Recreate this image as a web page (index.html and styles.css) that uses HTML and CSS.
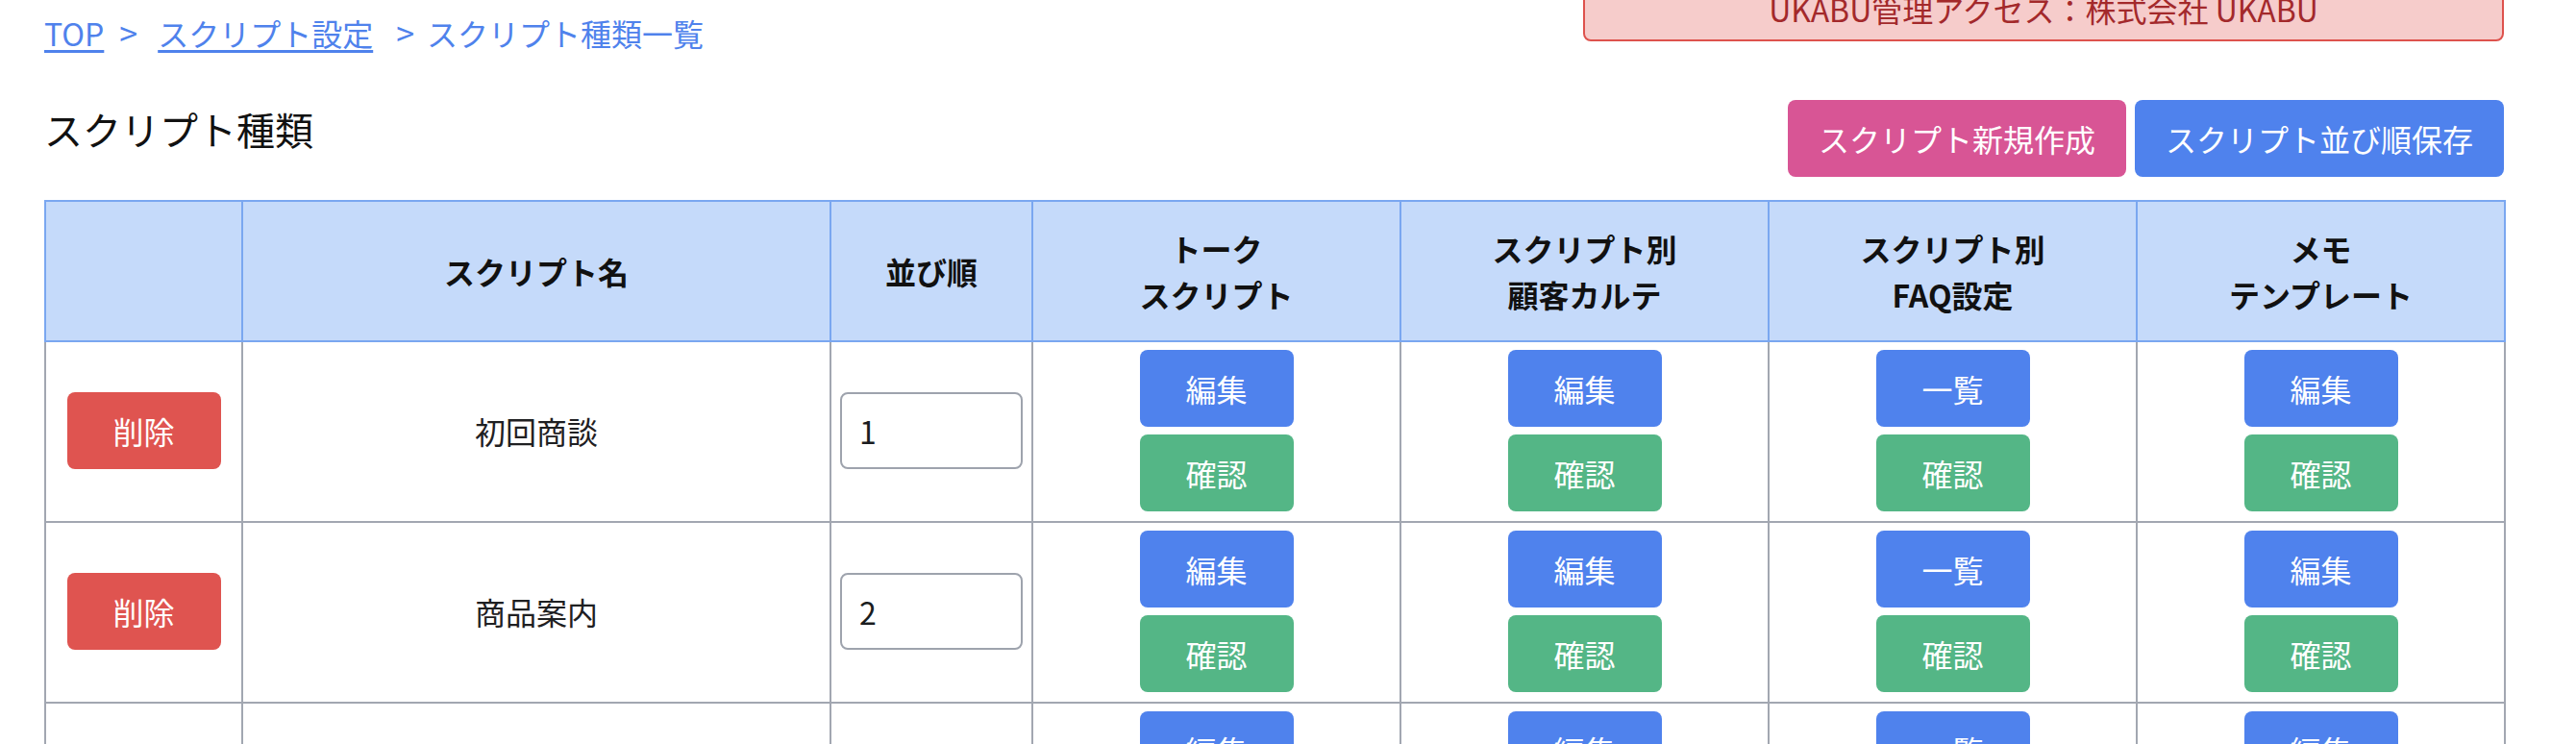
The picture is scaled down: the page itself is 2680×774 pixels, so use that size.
FILE: index.html
```html
<!DOCTYPE html>
<html lang="ja">
<head>
<meta charset="utf-8">
<title>スクリプト種類一覧</title>
<link rel="stylesheet" href="styles.css">
</head>
<body>
<div class="page">
  <div class="topbar">
    <nav class="crumbs">
      <a href="#" class="crumb-link">TOP</a><span class="sep sep1">&gt;</span><a href="#" class="crumb-link">スクリプト設定</a><span class="sep sep2">&gt;</span><span class="crumb-current">スクリプト種類一覧</span>
    </nav>
    <div class="notice">UKABU管理アクセス：株式会社 UKABU</div>
  </div>

  <div class="titlebar">
    <h1 class="title">スクリプト種類</h1>
    <div class="actions">
      <button class="btn btn-pink">スクリプト新規作成</button>
      <button class="btn btn-blue">スクリプト並び順保存</button>
    </div>
  </div>

  <table class="grid">
    <colgroup>
      <col class="c-del">
      <col class="c-name">
      <col class="c-order">
      <col class="c-act">
      <col class="c-act">
      <col class="c-act">
      <col class="c-act">
    </colgroup>
    <thead>
      <tr>
        <th></th>
        <th>スクリプト名</th>
        <th>並び順</th>
        <th>トーク<br>スクリプト</th>
        <th>スクリプト別<br>顧客カルテ</th>
        <th>スクリプト別<br>FAQ設定</th>
        <th>メモ<br>テンプレート</th>
      </tr>
    </thead>
    <tbody>
      <tr>
        <td><button class="btn btn-red btn-cell">削除</button></td>
        <td class="name">初回商談</td>
        <td><input class="order" type="text" value="1"></td>
        <td><div class="stack"><button class="btn btn-blue btn-cell">編集</button><button class="btn btn-green btn-cell">確認</button></div></td>
        <td><div class="stack"><button class="btn btn-blue btn-cell">編集</button><button class="btn btn-green btn-cell">確認</button></div></td>
        <td><div class="stack"><button class="btn btn-blue btn-cell">一覧</button><button class="btn btn-green btn-cell">確認</button></div></td>
        <td><div class="stack"><button class="btn btn-blue btn-cell">編集</button><button class="btn btn-green btn-cell">確認</button></div></td>
      </tr>
      <tr>
        <td><button class="btn btn-red btn-cell">削除</button></td>
        <td class="name">商品案内</td>
        <td><input class="order" type="text" value="2"></td>
        <td><div class="stack"><button class="btn btn-blue btn-cell">編集</button><button class="btn btn-green btn-cell">確認</button></div></td>
        <td><div class="stack"><button class="btn btn-blue btn-cell">編集</button><button class="btn btn-green btn-cell">確認</button></div></td>
        <td><div class="stack"><button class="btn btn-blue btn-cell">一覧</button><button class="btn btn-green btn-cell">確認</button></div></td>
        <td><div class="stack"><button class="btn btn-blue btn-cell">編集</button><button class="btn btn-green btn-cell">確認</button></div></td>
      </tr>
      <tr>
        <td><button class="btn btn-red btn-cell">削除</button></td>
        <td class="name">クロージング</td>
        <td><input class="order" type="text" value="3"></td>
        <td><div class="stack"><button class="btn btn-blue btn-cell">編集</button><button class="btn btn-green btn-cell">確認</button></div></td>
        <td><div class="stack"><button class="btn btn-blue btn-cell">編集</button><button class="btn btn-green btn-cell">確認</button></div></td>
        <td><div class="stack"><button class="btn btn-blue btn-cell">一覧</button><button class="btn btn-green btn-cell">確認</button></div></td>
        <td><div class="stack"><button class="btn btn-blue btn-cell">編集</button><button class="btn btn-green btn-cell">確認</button></div></td>
      </tr>
    </tbody>
  </table>
</div>
</body>
</html>
```
FILE: styles.css
```css
* { box-sizing: border-box; }

html, body {
  margin: 0;
  padding: 0;
  background: #ffffff;
  overflow: hidden;
}

body {
  font-family: "Noto Sans CJK JP", "Noto Sans", sans-serif;
  font-size: 32px;
  line-height: 48px;
  color: #1f2022;
}

.page {
  padding: 10px 75px 0 46px;
}

.topbar {
  display: flex;
  justify-content: space-between;
  align-items: flex-start;
  height: 48px;
}

.crumbs {
  color: #4f82ec;
  white-space: nowrap;
}

.crumb-link {
  color: #4f82ec;
  text-decoration: underline;
  text-underline-offset: 4px;
  text-decoration-thickness: 3px;
}

.sep { display: inline-block; font-size: 34px; }
.sep1 { margin: 0 21px 0 16px; }
.sep2 { margin: 0 13px 0 24px; }

.notice {
  width: 958px;
  margin-top: -35px;
  padding: 8px 24px;
  background: #f6cccb;
  border: 2px solid #de524d;
  border-radius: 8px;
  color: #a3292b;
  text-align: center;
  white-space: nowrap;
}

.titlebar {
  display: flex;
  justify-content: space-between;
  align-items: flex-start;
  margin-top: 46px;
  margin-bottom: 24px;
}

.title {
  margin: 0;
  font-size: 40px;
  line-height: 60px;
  font-weight: 400;
  color: #111111;
}

.actions {
  display: flex;
  gap: 9px;
}

.btn {
  font-family: inherit;
  font-size: 32px;
  line-height: 48px;
  padding: 16px 32px;
  border: none;
  border-radius: 8px;
  color: #ffffff;
  cursor: pointer;
  white-space: nowrap;
}

.btn-pink { background: #d85595; }
.btn-blue { background: #4f82ed; }
.btn-green { background: #54b686; }
.btn-red { background: #df5450; }

.btn-cell {
  width: 160px;
  padding: 16px 0;
  display: block;
}

.grid {
  width: 2559px;
  table-layout: fixed;
  border-collapse: collapse;
}

.c-del { width: 205px; }
.c-name { width: 612px; }
.c-order { width: 210px; }
.c-act { width: 383px; }

.grid th {
  background: #c5dafa;
  border: 2px solid #7aa7f0;
  padding: 24px 8px 24px;
  font-weight: 700;
  color: #111111;
  text-align: center;
  vertical-align: middle;
}

.grid td {
  border: 2px solid #a2a7b1;
  padding: 8px 9px 10px;
  text-align: center;
  vertical-align: middle;
}

.grid td > .btn-cell { margin: 0 auto; }

.stack {
  display: flex;
  flex-direction: column;
  align-items: center;
  gap: 8px;
}

.name { color: #1f2022; }

.order {
  display: block;
  width: 100%;
  height: 80px;
  padding: 0 18px;
  font-family: inherit;
  font-size: 32px;
  color: #1a1c20;
  background: #ffffff;
  border: 2px solid #9ea3ad;
  border-radius: 8px;
  outline: none;
}
```
